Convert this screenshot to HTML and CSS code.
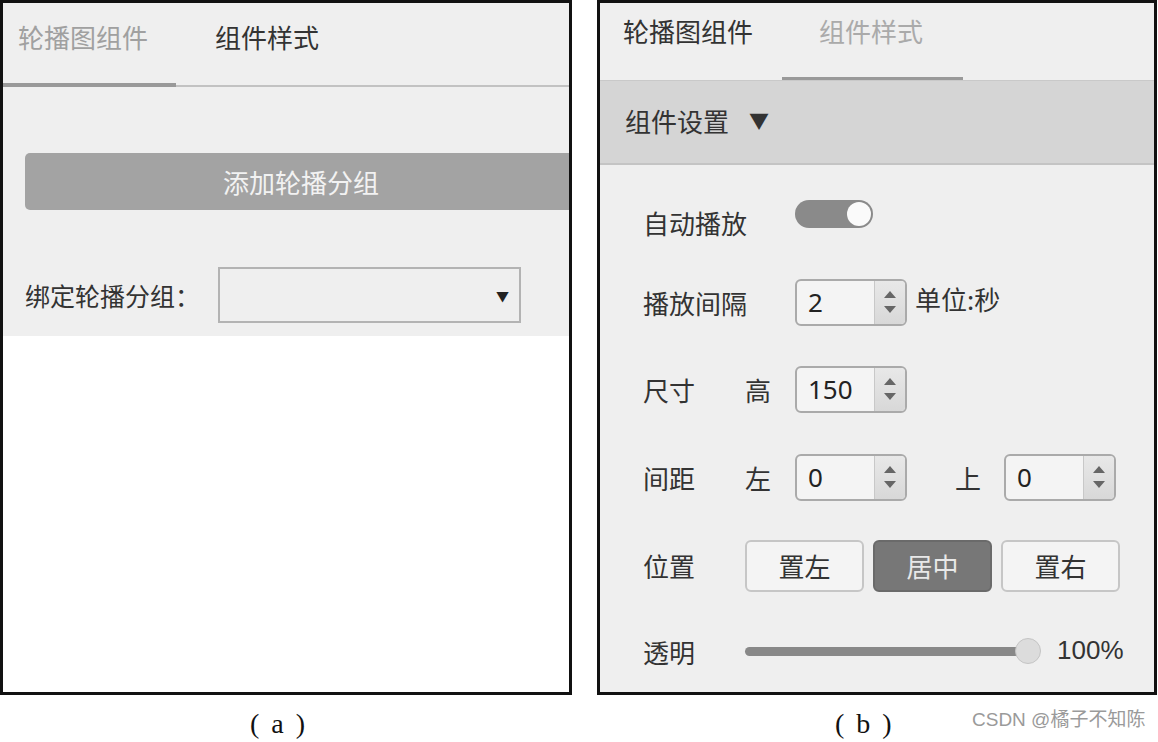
FILE: index.html
```html
<!DOCTYPE html>
<html lang="zh-CN">
<head>
<meta charset="utf-8">
<link rel="stylesheet" href="styles.css">
</head>
<body>
<div class="page">
  <div class="figures">
    <div class="panel panel-a">
      <div class="tabs-a">
        <div class="tab-a tab-a1">轮播图组件</div>
        <div class="tab-a tab-a2">组件样式</div>
      </div>
      <div class="body-a">
        <div class="add-btn">添加轮播分组</div>
        <div class="bind-row">
          <span class="bind-label">绑定轮播分组：</span>
          <div class="select"><span class="select-arrow">▼</span></div>
        </div>
      </div>
    </div>
    <div class="panel panel-b">
      <div class="tabs-b">
        <div class="tab-b tab-b1">轮播图组件</div>
        <div class="tab-b tab-b2">组件样式</div>
      </div>
      <div class="band">组件设置 <span class="band-arrow">▼</span></div>
      <div class="body-b">
        <div class="row row1">
          <span class="label wide">自动播放</span>
          <div class="toggle"><span class="knob"></span></div>
        </div>
        <div class="row row2">
          <span class="label wide">播放间隔</span>
          <div class="spin"><span class="val">2</span><span class="arrows"><i class="up"></i><i class="down"></i></span></div>
          <span class="unit">单位:秒</span>
        </div>
        <div class="row row3">
          <span class="label">尺寸</span>
          <span class="sub">高</span>
          <div class="spin"><span class="val">150</span><span class="arrows"><i class="up"></i><i class="down"></i></span></div>
        </div>
        <div class="row row4">
          <span class="label">间距</span>
          <span class="sub">左</span>
          <div class="spin"><span class="val">0</span><span class="arrows"><i class="up"></i><i class="down"></i></span></div>
          <span class="sub sub-top">上</span>
          <div class="spin"><span class="val">0</span><span class="arrows"><i class="up"></i><i class="down"></i></span></div>
        </div>
        <div class="row row5">
          <span class="label">位置</span>
          <div class="seg">
            <span class="seg-btn">置左</span>
            <span class="seg-btn active">居中</span>
            <span class="seg-btn">置右</span>
          </div>
        </div>
        <div class="row row6">
          <span class="label">透明</span>
          <div class="slider"><span class="track"></span><span class="thumb"></span></div>
          <span class="pct">100%</span>
        </div>
      </div>
    </div>
  </div>
  <div class="captions">
    <div class="cap cap-a">(<span class="cap-l">a</span>)</div>
    <div class="cap cap-b">(<span class="cap-l">b</span>)</div>
    <div class="credit">CSDN @橘子不知陈</div>
  </div>
</div>
</body>
</html>
```

FILE: styles.css
```css
* { box-sizing: border-box; margin: 0; padding: 0; }
html, body { background: #fff; }
body {
  width: 1158px;
  height: 742px;
  overflow: hidden;
  font-family: "Noto Sans CJK SC", "Noto Sans", sans-serif;
  color: #333;
}
.page { width: 1158px; }
.figures { display: flex; gap: 25px; }
.panel {
  border: 3px solid #111;
  height: 695px;
  overflow: hidden;
  position: relative;
}
.panel-a { width: 572px; background: #fff; }
.panel-b { width: 560px; background: #efefef; }

/* panel a */
.tabs-a {
  display: flex;
  height: 84px;
  background: #efefef;
  border-bottom: 2px solid #c2c2c2;
}
.tab-a {
  font-size: 26px;
  line-height: 1;
  padding-top: 21px;
}
.tab-a1 {
  width: 173px;
  padding-left: 15px;
  color: #a0a0a0;
  border-bottom: 4px solid #999;
  margin-bottom: -2px;
}
.tab-a2 { padding-left: 39px; color: #333; }
.body-a {
  background: #efefef;
  height: 249px;
  padding: 66px 0 0 22px;
}
.add-btn {
  width: 552px;
  height: 57px;
  background: #a3a3a3;
  border-radius: 5px;
  color: #f2f2f2;
  font-size: 26px;
  display: flex;
  align-items: center;
  justify-content: center;
}
.bind-row {
  display: flex;
  align-items: center;
  margin-top: 57px;
}
.bind-label { font-size: 25px; width: 193px; color: #333; }
.select {
  width: 303px;
  height: 56px;
  border: 2px solid #b3b3b3;
  display: flex;
  align-items: center;
  justify-content: flex-end;
  padding-right: 10px;
}
.select-arrow { font-size: 13px; color: #222; }

/* panel b */
.tabs-b {
  display: flex;
  height: 77px;
  font-size: 26px;
  line-height: 1;
}
.tab-b { padding-top: 15px; }
.tab-b1 { padding-left: 23px; width: 182px; color: #333; }
.tab-b2 {
  width: 181px;
  padding-left: 37px;
  color: #aaa;
  border-bottom: 3px solid #999;
}
.band {
  height: 85px;
  background: #d5d5d5;
  border-top: 1px solid #c9c9c9;
  border-bottom: 2px solid #c4c4c4;
  font-size: 26px;
  display: flex;
  align-items: center;
  padding-left: 25px;
  padding-bottom: 4px;
  color: #333;
}
.band-arrow { font-size: 20px; margin-left: 20px; color: #333; }
.body-b { padding-left: 43px; }
.row {
  display: flex;
  align-items: center;
  font-size: 26px;
}
.row1 { height: 97px; padding-top: 17px; }
.row2 { height: 80px; }
.row3 { height: 94px; }
.row4 { height: 82px; }
.row5 { height: 95px; }
.row6 { height: 76px; }
.label { width: 102px; color: #333; }
.label.wide { width: 152px; }
.sub { width: 50px; color: #333; }
.sub-top { margin-left: 48px; width: 49px; }
.toggle {
  width: 78px;
  height: 28px;
  border-radius: 14px;
  background: #8a8a8a;
  margin-bottom: 16px;
  display: flex;
  align-items: center;
  justify-content: flex-end;
  padding-right: 2px;
}
.knob {
  width: 24px;
  height: 24px;
  border-radius: 50%;
  background: #fafafa;
}
.spin {
  width: 112px;
  height: 47px;
  border: 2px solid #aaa;
  border-radius: 6px;
  background: #f4f4f4;
  display: flex;
  overflow: hidden;
}
.val {
  flex: 1;
  font-family: "Noto Sans", sans-serif;
  font-size: 26px;
  line-height: 43px;
  padding-left: 11px;
  color: #222;
}
.arrows {
  width: 31px;
  border-left: 1px solid #c8c8c8;
  background: linear-gradient(#e8e8e8, #d8d8d8);
  display: flex;
  flex-direction: column;
  align-items: center;
  justify-content: space-around;
  padding: 6px 0;
}
.up {
  width: 0; height: 0;
  border-left: 6px solid transparent;
  border-right: 6px solid transparent;
  border-bottom: 7px solid #666;
}
.down {
  width: 0; height: 0;
  border-left: 6px solid transparent;
  border-right: 6px solid transparent;
  border-top: 7px solid #666;
}
.unit { margin-left: 8px; margin-bottom: 8px; color: #333; }
.seg { display: flex; gap: 9px; }
.seg-btn {
  width: 119px;
  height: 52px;
  border: 2px solid #c6c6c6;
  border-radius: 6px;
  background: #f4f4f4;
  display: flex;
  align-items: center;
  justify-content: center;
  color: #333;
}
.seg-btn.active { background: #777; border-color: #6a6a6a; color: #e8e8e8; }
.slider {
  position: relative;
  width: 296px;
  height: 28px;
  display: flex;
  align-items: center;
  margin-bottom: 0;
}
.track {
  width: 285px;
  height: 9px;
  background: #888;
  border-radius: 5px;
}
.thumb {
  position: absolute;
  left: 270px;
  top: 1px;
  width: 26px;
  height: 26px;
  border-radius: 50%;
  background: #dcdcdc;
  border: 1px solid #c4c4c4;
}
.pct {
  font-family: "Liberation Sans", sans-serif;
  font-size: 26px;
  margin-left: 16px;
  margin-bottom: 2px;
  color: #333;
}

/* captions */
.captions {
  position: relative;
  height: 47px;
  font-family: "Liberation Serif", serif;
  font-size: 28px;
  color: #111;
}
.cap { position: absolute; top: 13px; }
.cap-a { left: 250px; }
.cap-b { left: 835px; }
.cap-l { padding: 0 12px; }
.credit {
  position: absolute;
  left: 972px;
  top: 9px;
  font-family: "Liberation Sans", "Noto Sans CJK SC", sans-serif;
  font-size: 19px;
  color: #9a9a9a;
}
```
